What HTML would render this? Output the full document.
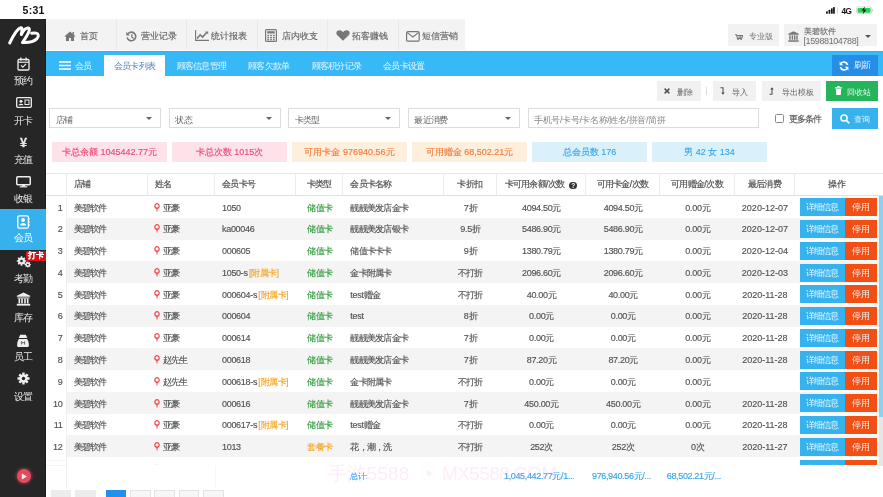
<!DOCTYPE html>
<html><head><meta charset="utf-8"><style>
*{margin:0;padding:0;box-sizing:border-box}
html,body{width:883px;height:497px;overflow:hidden;background:#fff}
body{position:relative;font-family:"Liberation Sans",sans-serif;color:#555;font-size:9px;letter-spacing:-0.75px}
.abs{position:absolute}
#status{position:absolute;left:0;top:0;width:883px;height:19px;background:#fff}
#time{position:absolute;left:22.5px;top:3.6px;font-size:10.5px;line-height:12px;font-weight:bold;color:#111;letter-spacing:0.3px;-webkit-text-stroke:0}
#side{position:absolute;z-index:10;left:0;top:19px;width:46px;height:478px;background:#262626}
.si{position:absolute;left:0;width:46px;height:40px;color:#e8e8e8;text-align:center}
.si .t{position:absolute;left:0;width:46px;font-size:10px;line-height:10px}
.si svg{position:absolute}
.si.act{background:#36b1ee;color:#fff}
#topnav{position:absolute;left:46px;top:19px;width:419px;height:31px;background:#f3f3f3}
.tn{position:absolute;top:0;height:31px;border-left:1px solid #e9e9e9;color:#666;font-size:9px;letter-spacing:0;line-height:31px}
.tn svg{position:absolute;margin-left:-1px}
.tn .tx{position:absolute;top:1.8px;margin-left:-1px}
#pro{position:absolute;left:728.4px;top:23.8px;width:50.4px;height:22.2px;background:#f2f2f2;color:#777;font-size:8px;letter-spacing:0;line-height:26px}
#acct{position:absolute;left:784px;top:23.8px;width:93.2px;height:22.2px;background:#f2f2f2;color:#777;font-size:8px;letter-spacing:0}
#bluebar{position:absolute;left:46px;top:51px;width:837px;height:25px;background:#36b9f6;border-top:1px solid #2cb4f4}
.bt{position:absolute;top:1.5px;height:25px;line-height:25px;color:#e9f6fd;font-size:9px}
#acttab{position:absolute;left:104px;top:55px;width:61px;height:21px;background:#fff;color:#5286bd;-webkit-text-stroke:0;font-size:9px;line-height:23px;text-align:center}
#refresh{position:absolute;left:832px;top:55px;width:46px;height:21px;background:#278ee7;color:#e6f2fc;font-size:8.5px;line-height:21px}
.tb{position:absolute;top:80.5px;height:20.5px;background:#f1f1f1;color:#666;font-size:8px;letter-spacing:0;line-height:24px}
.sel{position:absolute;top:108.2px;height:20.3px;border:1px solid #dcdcdc;background:#fff;color:#666;font-size:9px;line-height:23px;padding-left:5.8px}
.sel .car{position:absolute;right:8px;top:8px;width:0;height:0;border-left:3px solid transparent;border-right:3px solid transparent;border-top:3.5px solid #666}
.badge{position:absolute;top:142px;width:115px;height:20px;line-height:20px;text-align:center;font-size:9px;letter-spacing:0}
.pk{background:#fde2ea;color:#ec4a78}
.or{background:#fdefdc;color:#f47c3c}
.bl{background:#daf1fc;color:#3aa6e6}
#thead{position:absolute;left:0;top:173px;width:883px;height:22.6px;border-top:1px solid #e8e8e8;border-bottom:1.5px solid #e0e0e0}
#thead .c{top:0;height:21px;line-height:21px}
.c{position:absolute;white-space:nowrap;overflow:hidden}
.hd{border-right:1px solid #ececec;color:#4a4a4a}
.left{text-align:left;padding-left:7px}
.center{text-align:center}
.right{text-align:right;padding-right:3px}
.row{position:absolute;left:0;width:883px;height:21.77px}
.row .c{top:1.6px;height:21.77px;line-height:21.77px;color:#525252}
.row.even{background:linear-gradient(to right,#fff 66.5px,#f4f4f4 66.5px)}
.idx{border-right:1px solid #eee}
.gr{color:#2d9a3a}
.og{color:#f5a623}
.fs{color:#f5a623;margin-left:1.2px;letter-spacing:-0.5px}
.pin{display:inline-block;vertical-align:-1px;margin-left:-0.8px;margin-right:2.8px}
.ops{position:absolute;top:2.3px;height:18px;font-size:0;white-space:nowrap}
.ops span{display:inline-block;height:18px;line-height:18px;font-size:8.5px;color:#e9f6fd;text-align:center}
.b1{width:45px;background:#36b3ef}
.b2{width:32px;background:#f14f13}
.q{display:inline-block;width:7.5px;height:7.5px;border-radius:50%;background:#333;color:#fff;font-size:6.5px;line-height:7.5px;text-align:center;vertical-align:-0.5px;font-weight:bold;letter-spacing:0;-webkit-text-stroke:0;margin-left:3px}
#tbody{position:absolute;left:0;top:0}

.a{letter-spacing:-0.3px}
#wrap{position:absolute;left:0;top:0;width:883px;height:497px;overflow:hidden;will-change:transform}
#wrap{-webkit-text-stroke:0.15px currentColor}
#side .t{-webkit-text-stroke:0}
.dt .a{letter-spacing:0}
.ops span{-webkit-text-stroke:0}
.bt,#refresh,.tb span,#pro span{-webkit-text-stroke:0}
.wm{top:462px;line-height:24px;font-size:19px;color:rgba(248,160,225,0.2);white-space:nowrap;-webkit-text-stroke:0;letter-spacing:0.2px}
.sel{-webkit-text-stroke:0}

</style></head><body><div id="wrap">
<div id="status"><div id="time">5:31</div>
<svg class="abs" style="left:826px;top:6px" width="48" height="9" viewBox="0 0 48 9">
<g fill="#111"><rect x="0.1" y="5.2" width="1.7" height="2.5" rx="0.5"/><rect x="2.6" y="3.8" width="1.7" height="3.9" rx="0.5"/><rect x="5" y="2.3" width="1.7" height="5.4" rx="0.5"/><rect x="7.1" y="1" width="1.7" height="6.7" rx="0.5"/></g>
<rect x="10.9" y="1" width="0.8" height="6.7" fill="#ccc"/>
<text x="15.6" y="7.7" font-size="8.2" font-family="Liberation Sans" font-weight="bold" fill="#111" style="-webkit-text-stroke:0">4G</text>
<rect x="30.6" y="0.9" width="15" height="6.8" rx="1.8" fill="#fff" stroke="#d8c8c8" stroke-width="0.8"/><rect x="31.6" y="1.9" width="13" height="4.8" rx="0.8" fill="#2fcf58"/><rect x="46" y="3.2" width="0.9" height="2.2" fill="#ccc"/>
<path d="M38.9 0.6 L35.6 4.6 L37.8 4.6 L36.8 8.2 L40.3 3.7 L38.1 3.7 Z" fill="#111"/>
</svg>
</div>
<div id="side">
<div class="abs" style="left:44.6px;top:0;width:1.4px;height:478px;background:#1d1d1d"></div>
<svg class="abs" style="left:7px;top:6px" width="34" height="21" viewBox="0 0 34 21">
<path d="M2.7 18 C6 11 10 3.6 13.7 2.7 C15.6 2.3 15 6 14.3 9.6 C16.2 5.6 18.6 2.9 21.1 3 C23.6 3.1 22.6 7.2 15.5 17.5 C21 17.8 27 16.6 30 13.6 C32.1 11.2 31.6 8.6 29.1 8.1 C27.6 7.8 26.2 8 24.7 8.3" fill="none" stroke="#fff" stroke-width="3" stroke-linecap="round" stroke-linejoin="round"/>
</svg>
<!-- items: top relative to side (19) -->
<div class="si" style="top:33px">
 <svg style="left:16.5px;top:4.5px" width="13" height="14" viewBox="0 0 13 14"><rect x="1" y="2.5" width="11" height="10.5" rx="1" fill="none" stroke="#eee" stroke-width="1.3"/><path d="M1 5.2h11" stroke="#eee" stroke-width="1.2"/><path d="M3.8 0.6v3M9.2 0.6v3" stroke="#eee" stroke-width="1.4"/><path d="M4 8.3l1.8 1.8 3.3-3.3" fill="none" stroke="#eee" stroke-width="1.2"/></svg>
 <div class="t" style="top:24px">预约</div></div>
<div class="si" style="top:72.5px">
 <svg style="left:15.5px;top:5px" width="16" height="11" viewBox="0 0 16 11"><rect x="0.7" y="0.7" width="14.6" height="9.6" rx="1" fill="none" stroke="#eee" stroke-width="1.3"/><circle cx="5" cy="4.2" r="1.5" fill="#eee"/><path d="M2.6 8.3c0-2 4.8-2 4.8 0z" fill="#eee"/><rect x="9" y="3" width="4" height="4.5" fill="none" stroke="#eee" stroke-width="1"/></svg>
 <div class="t" style="top:24px">开卡</div></div>
<div class="si" style="top:112px">
 <div style="position:absolute;left:0;width:46px;top:5px;font-size:12.5px;font-weight:bold;line-height:14px;color:#e8e8e8;-webkit-text-stroke:0.3px #e8e8e8">¥</div>
 <div class="t" style="top:23.8px">充值</div></div>
<div class="si" style="top:151.5px">
 <svg style="left:15.6px;top:5.8px" width="15" height="12" viewBox="0 0 15 12"><rect x="0.75" y="0.75" width="13.5" height="8" rx="1" fill="none" stroke="#eee" stroke-width="1.5"/><rect x="5.8" y="9" width="3.4" height="1.4" fill="#eee"/><rect x="3.8" y="10.2" width="7.4" height="1.2" fill="#eee"/></svg>
 <div class="t" style="top:23.5px">收银</div></div>
<div class="si act" style="top:190px;height:41px">
 <svg style="left:16.5px;top:6px" width="14" height="14" viewBox="0 0 14 14"><rect x="0.8" y="0.8" width="10.6" height="12.4" rx="1.6" fill="none" stroke="#fff" stroke-width="1.3"/><circle cx="6.1" cy="5" r="1.9" fill="#fff"/><path d="M3 10.6c0-3.6 6.2-3.6 6.2 0z" fill="#fff"/><path d="M12.2 3v1.6M12.2 6.2v1.6M12.2 9.4v1.6" stroke="#fff" stroke-width="1"/></svg>
 <div class="t" style="top:24px">会员</div></div>
<div class="si" style="top:230px">
 <svg style="left:15.5px;top:6.5px" width="16" height="12" viewBox="0 0 16 12"><g fill="#eee"><circle cx="5.5" cy="5" r="3.6"/><circle cx="11.8" cy="8.6" r="2.4"/></g><g fill="#262626"><circle cx="5.5" cy="5" r="1.3"/><circle cx="11.8" cy="8.6" r="0.9"/></g><g stroke="#eee" stroke-width="1.6"><path d="M5.5 0.3v9.4M0.8 5h9.4M2.2 1.7l6.6 6.6M8.8 1.7l-6.6 6.6"/><path d="M11.8 5.6v6M8.8 8.6h6M9.7 6.5l4.2 4.2M13.9 6.5l-4.2 4.2" stroke-width="1.1"/></g><g fill="#262626"><circle cx="5.5" cy="5" r="1.3"/><circle cx="11.8" cy="8.6" r="0.9"/></g></svg>
 <div style="position:absolute;left:25.5px;top:1.5px;width:20px;height:10px;background:#d8141b;color:#fff;font-size:8px;font-weight:bold;line-height:10px;text-align:center;border-radius:2px 0 0 2px">打卡</div>
 <div class="t" style="top:25px">考勤</div></div>
<div class="si" style="top:269.5px">
 <svg style="left:15.5px;top:3.5px" width="15" height="14" viewBox="0 0 15 14"><path d="M7.5 0.5L0.8 3.8v1h13.4v-1z" fill="#eee"/><rect x="1.5" y="5.5" width="12" height="1" fill="#eee"/><rect x="2.5" y="6.5" width="1.6" height="5" fill="#eee"/><rect x="5.2" y="6.5" width="1.6" height="5" fill="#eee"/><rect x="8.2" y="6.5" width="1.6" height="5" fill="#eee"/><rect x="10.9" y="6.5" width="1.6" height="5" fill="#eee"/><rect x="0.8" y="11.8" width="13.4" height="1.8" fill="#eee"/></svg>
 <div class="t" style="top:24.5px">库存</div></div>
<div class="si" style="top:309px">
 <svg style="left:17px;top:5.5px" width="12" height="14" viewBox="0 0 12 14"><path d="M3.2 0.8h5.6l1.5 3.2H1.7z" fill="#eee"/><path d="M1.8 5h8.4c1.1 2 1.7 4.2 1.7 6.4 0 1-0.8 1.6-1.8 1.6H1.9c-1 0-1.8-0.6-1.8-1.6C0.1 9.2 0.7 7 1.8 5z" fill="#eee"/><path d="M4.4 10.5V7.6l1.6 1.6 1.6-1.6v2.9" stroke="#555" stroke-width="0.9" fill="none"/></svg>
 <div class="t" style="top:24px">员工</div></div>
<div class="si" style="top:348.5px">
 <svg style="left:16.5px;top:4px" width="13" height="13" viewBox="0 0 13 13"><g stroke="#eee" stroke-width="2.4"><path d="M6.5 0.5v12M0.5 6.5h12M2.3 2.3l8.4 8.4M10.7 2.3l-8.4 8.4"/></g><circle cx="6.5" cy="6.5" r="4.2" fill="#eee"/><circle cx="6.5" cy="6.5" r="1.7" fill="#262626"/></svg>
 <div class="t" style="top:24px">设置</div></div>
<div style="position:absolute;left:16.5px;top:450px;width:14px;height:14px;border-radius:50%;background:#e4495d;box-shadow:0 0 3px 1px rgba(228,73,93,0.5)"></div>
<svg class="abs" style="left:21px;top:453.5px" width="7" height="7" viewBox="0 0 7 7"><path d="M0.8 0.5L6 3.5L0.8 6.5z" fill="#eee"/></svg>
</div>

<div id="topnav">
 <div class="tn" style="left:0;width:70px;border-left:none;padding-left:1px">
  <svg style="left:19px;top:11.5px" width="12" height="10" viewBox="0 0 11 9"><path d="M5.5 0.3L0.2 5h1.6v4h2.8V6.3h1.8V9h2.8V5h1.6z" fill="#777"/><rect x="7.8" y="0.8" width="1.4" height="2.5" fill="#777"/></svg>
  <div class="tx" style="left:34.5px">首页</div></div>
 <div class="tn" style="left:70px;width:70px;padding:0">
  <svg style="left:9.5px;top:11.5px" width="11" height="11" viewBox="0 0 11 11"><path d="M2.2 2.6A4.3 4.3 0 1 1 1.2 6.3" fill="none" stroke="#777" stroke-width="1.6"/><path d="M0.3 0.8v3.6h3.6z" fill="#777"/><path d="M5.8 3.2v2.8l1.8 1.4" fill="none" stroke="#777" stroke-width="1.3"/></svg>
  <div class="tx" style="left:24.5px">营业记录</div></div>
 <div class="tn" style="left:140px;width:71.5px">
  <svg style="left:9px;top:11px" width="14" height="11" viewBox="0 0 14 11"><path d="M0.6 0v10.4H14" fill="none" stroke="#777" stroke-width="1.1"/><path d="M2 8.6l3.2-3.8 2.4 2.2 4-4.6" fill="none" stroke="#777" stroke-width="1.6"/><path d="M10.2 1.6h3v3z" fill="#777"/></svg>
  <div class="tx" style="left:25px">统计报表</div></div>
 <div class="tn" style="left:211px;width:70px">
  <svg style="left:8px;top:9.5px" width="12" height="13" viewBox="0 0 12 13"><rect x="0.6" y="0.6" width="10.8" height="11.8" rx="1" fill="none" stroke="#777" stroke-width="1.2"/><rect x="2.3" y="2.2" width="7.4" height="2.3" fill="#777"/><g fill="#777"><rect x="2.3" y="5.8" width="1.8" height="1.4"/><rect x="5.1" y="5.8" width="1.8" height="1.4"/><rect x="7.9" y="5.8" width="1.8" height="1.4"/><rect x="2.3" y="8" width="1.8" height="1.4"/><rect x="5.1" y="8" width="1.8" height="1.4"/><rect x="7.9" y="8" width="1.8" height="1.4"/><rect x="2.3" y="10.1" width="1.8" height="1.2"/><rect x="5.1" y="10.1" width="1.8" height="1.2"/><rect x="7.9" y="10.1" width="1.8" height="1.2"/></g></svg>
  <div class="tx" style="left:24.5px">店内收支</div></div>
 <div class="tn" style="left:281px;width:71px">
  <svg style="left:8.5px;top:11px" width="14" height="11" viewBox="0 0 14 11"><path d="M7 10.8L1.3 5.3C-0.6 3.3 0.4 0.2 3.5 0.2 5.2 0.2 6.4 1.3 7 2.3 7.6 1.3 8.8 0.2 10.5 0.2c3.1 0 4.1 3.1 2.2 5.1z" fill="#777"/></svg>
  <div class="tx" style="left:24.5px">拓客赚钱</div></div>
 <div class="tn" style="left:352px;width:67px">
  <svg style="left:7.5px;top:11.5px" width="14" height="11" viewBox="0 0 14 11"><rect x="0.6" y="0.6" width="12.6" height="9.6" rx="1.3" fill="none" stroke="#777" stroke-width="1.2"/><path d="M1 1.4l5.9 4.6 5.9-4.6" fill="none" stroke="#777" stroke-width="1.2"/></svg>
  <div class="tx" style="left:24px">短信营销</div></div>
</div>
<div id="pro">
 <svg class="abs" style="left:6.4px;top:9.8px" width="8" height="6.5" viewBox="0 0 10 8"><path d="M0 0.8h1.8l1.4 4.6h5.1L9.6 1.8H2.6" fill="none" stroke="#777" stroke-width="1.4"/><circle cx="3.8" cy="7" r="1" fill="#777"/><circle cx="7.6" cy="7" r="1" fill="#777"/><path d="M5.2 2v3M7 2v3" stroke="#777" stroke-width="1"/></svg>
 <span class="abs" style="left:20.5px;top:0">专业版</span>
</div>
<div id="acct">
 <svg class="abs" style="left:4px;top:7px" width="11" height="11" viewBox="0 0 11 11"><path d="M5.5 0.2L0.3 2.8v1h10.4v-1z" fill="#777"/><g fill="#777"><rect x="1.3" y="4.3" width="1.4" height="4.5"/><rect x="3.7" y="4.3" width="1.4" height="4.5"/><rect x="6" y="4.3" width="1.4" height="4.5"/><rect x="8.3" y="4.3" width="1.4" height="4.5"/><rect x="0.3" y="9.3" width="10.4" height="1.5"/></g></svg>
 <span class="abs" style="left:19.5px;top:3.5px;line-height:10px;color:#707070">美碧软件</span>
 <span class="abs" style="left:19.5px;top:12.5px;line-height:10px;color:#707070;font-size:9px;letter-spacing:-0.4px;-webkit-text-stroke:0">[15988104788]</span>
 <div class="abs" style="left:81px;top:10.8px;width:0;height:0;border-left:3px solid transparent;border-right:3px solid transparent;border-top:3.5px solid #555"></div>
</div>

<div id="bluebar">
 <svg class="abs" style="left:13px;top:9px" width="12" height="9" viewBox="0 0 12 9"><path d="M0 1h12M0 4.5h12M0 8h12" stroke="#fff" stroke-width="1.6"/></svg>
 <div class="bt" style="left:29px">会员</div>
 <div class="bt" style="left:130.5px">顾客信息管理</div>
 <div class="bt" style="left:202px">顾客欠款单</div>
 <div class="bt" style="left:265.5px">顾客积分记录</div>
 <div class="bt" style="left:337px">会员卡设置</div>
</div>
<div id="acttab">会员卡列表</div>
<div id="refresh">
 <svg class="abs" style="left:6.5px;top:5.5px" width="10" height="10" viewBox="0 0 10 10"><path d="M8.6 4A3.8 3.8 0 0 0 1.8 2.6" fill="none" stroke="#fff" stroke-width="1.6"/><path d="M1.4 6A3.8 3.8 0 0 0 8.2 7.4" fill="none" stroke="#fff" stroke-width="1.6"/><path d="M0.6 0.6v3.6h3.6z" fill="#fff"/><path d="M9.4 9.4V5.8H5.8z" fill="#fff"/></svg>
 <span class="abs" style="left:21.5px;top:0">刷新</span>
</div>

<div class="tb" style="left:657px;width:44px">
 <svg class="abs" style="left:7px;top:7px" width="6" height="6" viewBox="0 0 6 6"><path d="M0.6 0.6l4.8 4.8M5.4 0.6L0.6 5.4" stroke="#555" stroke-width="1.5"/></svg>
 <span class="abs" style="left:20px;top:0">删除</span></div>
<div class="abs" style="left:706px;top:87px;width:1px;height:8px;background:#ddd"></div>
<div class="tb" style="left:712.5px;width:43.5px">
 <svg class="abs" style="left:7px;top:6px" width="6" height="8" viewBox="0 0 6 8"><path d="M0.5 0.7h2.5v6.3" fill="none" stroke="#555" stroke-width="1.1"/><path d="M1.2 5.6l1.8 2.2 1.8-2.2z" fill="#555"/></svg>
 <span class="abs" style="left:19.5px;top:0">导入</span></div>
<div class="tb" style="left:761.5px;width:59.5px">
 <svg class="abs" style="left:7px;top:6px" width="6" height="8" viewBox="0 0 6 8"><path d="M0.5 7.3h2.5V1" fill="none" stroke="#555" stroke-width="1.1"/><path d="M1.2 2.4l1.8-2.2 1.8 2.2z" fill="#555"/></svg>
 <span class="abs" style="left:20px;top:0">导出模板</span></div>
<div class="tb" style="left:826px;width:52px;background:#25b45a;color:#e6f7ec">
 <svg class="abs" style="left:8.5px;top:5.5px" width="7" height="9" viewBox="0 0 7 9"><rect x="0" y="1.3" width="7" height="1.2" fill="#fff"/><rect x="2.3" y="0" width="2.4" height="1.3" fill="#fff"/><path d="M0.8 3h5.4l-0.5 6H1.3z" fill="#fff"/></svg>
 <span class="abs" style="left:21px;top:0">回收站</span></div>

<div class="sel" style="left:49px;width:112px">店铺<i class="car"></i></div>
<div class="sel" style="left:168.5px;width:112px">状态<i class="car"></i></div>
<div class="sel" style="left:288px;width:112px">卡类型<i class="car"></i></div>
<div class="sel" style="left:407.5px;width:112.5px">最近消费<i class="car"></i></div>
<div class="sel" style="left:527.5px;width:231.5px;color:#888;letter-spacing:-0.4px">手机号/卡号/卡名称/姓名/拼音/简拼</div>
<div class="abs" style="left:775px;top:113.5px;width:9px;height:9px;border:1px solid #8a8a8a;border-radius:1.5px;background:#fff"></div>
<div class="abs" style="left:788.5px;top:108.5px;line-height:20px;font-size:9px;color:#555">更多条件</div>
<div class="tb" style="left:832px;top:108.3px;width:46px;background:#36b3ef;color:#e9f6fd">
 <svg class="abs" style="left:8px;top:5.5px" width="10" height="10" viewBox="0 0 10 10"><circle cx="4" cy="4" r="3.1" fill="none" stroke="#fff" stroke-width="1.5"/><path d="M6.3 6.3l3 3" stroke="#fff" stroke-width="1.8"/></svg>
 <span class="abs" style="left:22px;top:0">查询</span></div>

<div class="badge pk" style="left:52px">卡总余额 1045442.77元</div>
<div class="badge pk" style="left:172px">卡总次数 1015次</div>
<div class="badge or" style="left:292px">可用卡金 976940.56元</div>
<div class="badge or" style="left:412px">可用赠金 68,502.21元</div>
<div class="badge bl" style="left:532px">总会员数 176</div>
<div class="badge bl" style="left:652px">男 42 女 134</div>

<div id="thead"><div class="c center hd" style="left:46.00px;width:20.50px;"></div><div class="c left hd" style="left:66.50px;width:81.00px;">店铺</div><div class="c left hd" style="left:147.50px;width:67.50px;">姓名</div><div class="c left hd" style="left:215.00px;width:81.00px;">会员卡号</div><div class="c center hd" style="left:296.00px;width:47.30px;">卡类型</div><div class="c left hd" style="left:343.30px;width:100.30px;">会员卡名称</div><div class="c center hd" style="left:443.60px;width:53.40px;">卡折扣</div><div class="c center hd" style="left:497.00px;width:88.70px;">卡可用余额<span class="a">/</span>次数 <span class='q'><span class="a">?</span></span></div><div class="c center hd" style="left:585.70px;width:74.70px;">可用卡金<span class="a">/</span>次数</div><div class="c center hd" style="left:660.40px;width:74.40px;">可用赠金<span class="a">/</span>次数</div><div class="c center hd" style="left:734.80px;width:60.20px;">最后消费</div><div class="c center hd" style="left:795.00px;width:83.00px;border-right:none">操作</div></div>
<div id="tbody"><div class="row" style="top:196.00px"><div class="c right idx" style="left:46.00px;width:20.50px;"><span class="a">1</span></div><div class="c left pl" style="left:66.50px;width:81.00px;">美碧软件</div><div class="c left pl2" style="left:147.50px;width:67.50px;"><svg class="pin" width="6" height="9" viewBox="0 0 6 9"><circle cx="3" cy="2.9" r="2.2" fill="none" stroke="#f5464f" stroke-width="1.2"/><path d="M2.2 4.9h1.6L3.3 8.7H2.7z" fill="#f5464f"/></svg>亚豪</div><div class="c left pl" style="left:215.00px;width:81.00px;"><span class="a">1050</span></div><div class="c center" style="left:296.00px;width:47.30px;"><span class="gr">储值卡</span></div><div class="c left pl" style="left:343.30px;width:100.30px;">靓靓美发店金卡</div><div class="c center" style="left:443.60px;width:53.40px;"><span class="a">7</span>折</div><div class="c center" style="left:497.00px;width:88.70px;"><span class="a">4094.50</span>元</div><div class="c center" style="left:585.70px;width:74.70px;"><span class="a">4094.50</span>元</div><div class="c center" style="left:660.40px;width:74.40px;"><span class="a">0.00</span>元</div><div class="c center dt" style="left:734.80px;width:60.20px;"><span class="a">2020-12-07</span></div><div class="ops" style="left:799.6px"><span class="b1">详细信息</span><span class="b2">停用</span></div></div><div class="row even" style="top:217.77px"><div class="c right idx" style="left:46.00px;width:20.50px;"><span class="a">2</span></div><div class="c left pl" style="left:66.50px;width:81.00px;">美碧软件</div><div class="c left pl2" style="left:147.50px;width:67.50px;"><svg class="pin" width="6" height="9" viewBox="0 0 6 9"><circle cx="3" cy="2.9" r="2.2" fill="none" stroke="#f5464f" stroke-width="1.2"/><path d="M2.2 4.9h1.6L3.3 8.7H2.7z" fill="#f5464f"/></svg>亚豪</div><div class="c left pl" style="left:215.00px;width:81.00px;"><span class="a">ka00046</span></div><div class="c center" style="left:296.00px;width:47.30px;"><span class="gr">储值卡</span></div><div class="c left pl" style="left:343.30px;width:100.30px;">靓靓美发店银卡</div><div class="c center" style="left:443.60px;width:53.40px;"><span class="a">9.5</span>折</div><div class="c center" style="left:497.00px;width:88.70px;"><span class="a">5486.90</span>元</div><div class="c center" style="left:585.70px;width:74.70px;"><span class="a">5486.90</span>元</div><div class="c center" style="left:660.40px;width:74.40px;"><span class="a">0.00</span>元</div><div class="c center dt" style="left:734.80px;width:60.20px;"><span class="a">2020-12-07</span></div><div class="ops" style="left:799.6px"><span class="b1">详细信息</span><span class="b2">停用</span></div></div><div class="row" style="top:239.54px"><div class="c right idx" style="left:46.00px;width:20.50px;"><span class="a">3</span></div><div class="c left pl" style="left:66.50px;width:81.00px;">美碧软件</div><div class="c left pl2" style="left:147.50px;width:67.50px;"><svg class="pin" width="6" height="9" viewBox="0 0 6 9"><circle cx="3" cy="2.9" r="2.2" fill="none" stroke="#f5464f" stroke-width="1.2"/><path d="M2.2 4.9h1.6L3.3 8.7H2.7z" fill="#f5464f"/></svg>亚豪</div><div class="c left pl" style="left:215.00px;width:81.00px;"><span class="a">000605</span></div><div class="c center" style="left:296.00px;width:47.30px;"><span class="gr">储值卡</span></div><div class="c left pl" style="left:343.30px;width:100.30px;">储值卡卡卡</div><div class="c center" style="left:443.60px;width:53.40px;"><span class="a">9</span>折</div><div class="c center" style="left:497.00px;width:88.70px;"><span class="a">1380.79</span>元</div><div class="c center" style="left:585.70px;width:74.70px;"><span class="a">1380.79</span>元</div><div class="c center" style="left:660.40px;width:74.40px;"><span class="a">0.00</span>元</div><div class="c center dt" style="left:734.80px;width:60.20px;"><span class="a">2020-12-04</span></div><div class="ops" style="left:799.6px"><span class="b1">详细信息</span><span class="b2">停用</span></div></div><div class="row even" style="top:261.31px"><div class="c right idx" style="left:46.00px;width:20.50px;"><span class="a">4</span></div><div class="c left pl" style="left:66.50px;width:81.00px;">美碧软件</div><div class="c left pl2" style="left:147.50px;width:67.50px;"><svg class="pin" width="6" height="9" viewBox="0 0 6 9"><circle cx="3" cy="2.9" r="2.2" fill="none" stroke="#f5464f" stroke-width="1.2"/><path d="M2.2 4.9h1.6L3.3 8.7H2.7z" fill="#f5464f"/></svg>亚豪</div><div class="c left pl" style="left:215.00px;width:81.00px;"><span class="a">1050-s</span><span class="fs"><span class="a">[</span>附属卡<span class="a">]</span></span></div><div class="c center" style="left:296.00px;width:47.30px;"><span class="gr">储值卡</span></div><div class="c left pl" style="left:343.30px;width:100.30px;">金卡附属卡</div><div class="c center" style="left:443.60px;width:53.40px;">不打折</div><div class="c center" style="left:497.00px;width:88.70px;"><span class="a">2096.60</span>元</div><div class="c center" style="left:585.70px;width:74.70px;"><span class="a">2096.60</span>元</div><div class="c center" style="left:660.40px;width:74.40px;"><span class="a">0.00</span>元</div><div class="c center dt" style="left:734.80px;width:60.20px;"><span class="a">2020-12-03</span></div><div class="ops" style="left:799.6px"><span class="b1">详细信息</span><span class="b2">停用</span></div></div><div class="row" style="top:283.08px"><div class="c right idx" style="left:46.00px;width:20.50px;"><span class="a">5</span></div><div class="c left pl" style="left:66.50px;width:81.00px;">美碧软件</div><div class="c left pl2" style="left:147.50px;width:67.50px;"><svg class="pin" width="6" height="9" viewBox="0 0 6 9"><circle cx="3" cy="2.9" r="2.2" fill="none" stroke="#f5464f" stroke-width="1.2"/><path d="M2.2 4.9h1.6L3.3 8.7H2.7z" fill="#f5464f"/></svg>亚豪</div><div class="c left pl" style="left:215.00px;width:81.00px;"><span class="a">000604-s</span><span class="fs"><span class="a">[</span>附属卡<span class="a">]</span></span></div><div class="c center" style="left:296.00px;width:47.30px;"><span class="gr">储值卡</span></div><div class="c left pl" style="left:343.30px;width:100.30px;"><span class="a">test</span>赠金</div><div class="c center" style="left:443.60px;width:53.40px;">不打折</div><div class="c center" style="left:497.00px;width:88.70px;"><span class="a">40.00</span>元</div><div class="c center" style="left:585.70px;width:74.70px;"><span class="a">40.00</span>元</div><div class="c center" style="left:660.40px;width:74.40px;"><span class="a">0.00</span>元</div><div class="c center dt" style="left:734.80px;width:60.20px;"><span class="a">2020-11-28</span></div><div class="ops" style="left:799.6px"><span class="b1">详细信息</span><span class="b2">停用</span></div></div><div class="row even" style="top:304.85px"><div class="c right idx" style="left:46.00px;width:20.50px;"><span class="a">6</span></div><div class="c left pl" style="left:66.50px;width:81.00px;">美碧软件</div><div class="c left pl2" style="left:147.50px;width:67.50px;"><svg class="pin" width="6" height="9" viewBox="0 0 6 9"><circle cx="3" cy="2.9" r="2.2" fill="none" stroke="#f5464f" stroke-width="1.2"/><path d="M2.2 4.9h1.6L3.3 8.7H2.7z" fill="#f5464f"/></svg>亚豪</div><div class="c left pl" style="left:215.00px;width:81.00px;"><span class="a">000604</span></div><div class="c center" style="left:296.00px;width:47.30px;"><span class="gr">储值卡</span></div><div class="c left pl" style="left:343.30px;width:100.30px;"><span class="a">test</span></div><div class="c center" style="left:443.60px;width:53.40px;"><span class="a">8</span>折</div><div class="c center" style="left:497.00px;width:88.70px;"><span class="a">0.00</span>元</div><div class="c center" style="left:585.70px;width:74.70px;"><span class="a">0.00</span>元</div><div class="c center" style="left:660.40px;width:74.40px;"><span class="a">0.00</span>元</div><div class="c center dt" style="left:734.80px;width:60.20px;"><span class="a">2020-11-28</span></div><div class="ops" style="left:799.6px"><span class="b1">详细信息</span><span class="b2">停用</span></div></div><div class="row" style="top:326.62px"><div class="c right idx" style="left:46.00px;width:20.50px;"><span class="a">7</span></div><div class="c left pl" style="left:66.50px;width:81.00px;">美碧软件</div><div class="c left pl2" style="left:147.50px;width:67.50px;"><svg class="pin" width="6" height="9" viewBox="0 0 6 9"><circle cx="3" cy="2.9" r="2.2" fill="none" stroke="#f5464f" stroke-width="1.2"/><path d="M2.2 4.9h1.6L3.3 8.7H2.7z" fill="#f5464f"/></svg>亚豪</div><div class="c left pl" style="left:215.00px;width:81.00px;"><span class="a">000614</span></div><div class="c center" style="left:296.00px;width:47.30px;"><span class="gr">储值卡</span></div><div class="c left pl" style="left:343.30px;width:100.30px;">靓靓美发店金卡</div><div class="c center" style="left:443.60px;width:53.40px;"><span class="a">7</span>折</div><div class="c center" style="left:497.00px;width:88.70px;"><span class="a">0.00</span>元</div><div class="c center" style="left:585.70px;width:74.70px;"><span class="a">0.00</span>元</div><div class="c center" style="left:660.40px;width:74.40px;"><span class="a">0.00</span>元</div><div class="c center dt" style="left:734.80px;width:60.20px;"><span class="a">2020-11-28</span></div><div class="ops" style="left:799.6px"><span class="b1">详细信息</span><span class="b2">停用</span></div></div><div class="row even" style="top:348.39px"><div class="c right idx" style="left:46.00px;width:20.50px;"><span class="a">8</span></div><div class="c left pl" style="left:66.50px;width:81.00px;">美碧软件</div><div class="c left pl2" style="left:147.50px;width:67.50px;"><svg class="pin" width="6" height="9" viewBox="0 0 6 9"><circle cx="3" cy="2.9" r="2.2" fill="none" stroke="#f5464f" stroke-width="1.2"/><path d="M2.2 4.9h1.6L3.3 8.7H2.7z" fill="#f5464f"/></svg>赵先生</div><div class="c left pl" style="left:215.00px;width:81.00px;"><span class="a">000618</span></div><div class="c center" style="left:296.00px;width:47.30px;"><span class="gr">储值卡</span></div><div class="c left pl" style="left:343.30px;width:100.30px;">靓靓美发店金卡</div><div class="c center" style="left:443.60px;width:53.40px;"><span class="a">7</span>折</div><div class="c center" style="left:497.00px;width:88.70px;"><span class="a">87.20</span>元</div><div class="c center" style="left:585.70px;width:74.70px;"><span class="a">87.20</span>元</div><div class="c center" style="left:660.40px;width:74.40px;"><span class="a">0.00</span>元</div><div class="c center dt" style="left:734.80px;width:60.20px;"><span class="a">2020-11-28</span></div><div class="ops" style="left:799.6px"><span class="b1">详细信息</span><span class="b2">停用</span></div></div><div class="row" style="top:370.16px"><div class="c right idx" style="left:46.00px;width:20.50px;"><span class="a">9</span></div><div class="c left pl" style="left:66.50px;width:81.00px;">美碧软件</div><div class="c left pl2" style="left:147.50px;width:67.50px;"><svg class="pin" width="6" height="9" viewBox="0 0 6 9"><circle cx="3" cy="2.9" r="2.2" fill="none" stroke="#f5464f" stroke-width="1.2"/><path d="M2.2 4.9h1.6L3.3 8.7H2.7z" fill="#f5464f"/></svg>赵先生</div><div class="c left pl" style="left:215.00px;width:81.00px;"><span class="a">000618-s</span><span class="fs"><span class="a">[</span>附属卡<span class="a">]</span></span></div><div class="c center" style="left:296.00px;width:47.30px;"><span class="gr">储值卡</span></div><div class="c left pl" style="left:343.30px;width:100.30px;">金卡附属卡</div><div class="c center" style="left:443.60px;width:53.40px;">不打折</div><div class="c center" style="left:497.00px;width:88.70px;"><span class="a">0.00</span>元</div><div class="c center" style="left:585.70px;width:74.70px;"><span class="a">0.00</span>元</div><div class="c center" style="left:660.40px;width:74.40px;"><span class="a">0.00</span>元</div><div class="c center dt" style="left:734.80px;width:60.20px;"></div><div class="ops" style="left:799.6px"><span class="b1">详细信息</span><span class="b2">停用</span></div></div><div class="row even" style="top:391.93px"><div class="c right idx" style="left:46.00px;width:20.50px;"><span class="a">10</span></div><div class="c left pl" style="left:66.50px;width:81.00px;">美碧软件</div><div class="c left pl2" style="left:147.50px;width:67.50px;"><svg class="pin" width="6" height="9" viewBox="0 0 6 9"><circle cx="3" cy="2.9" r="2.2" fill="none" stroke="#f5464f" stroke-width="1.2"/><path d="M2.2 4.9h1.6L3.3 8.7H2.7z" fill="#f5464f"/></svg>亚豪</div><div class="c left pl" style="left:215.00px;width:81.00px;"><span class="a">000616</span></div><div class="c center" style="left:296.00px;width:47.30px;"><span class="gr">储值卡</span></div><div class="c left pl" style="left:343.30px;width:100.30px;">靓靓美发店金卡</div><div class="c center" style="left:443.60px;width:53.40px;"><span class="a">7</span>折</div><div class="c center" style="left:497.00px;width:88.70px;"><span class="a">450.00</span>元</div><div class="c center" style="left:585.70px;width:74.70px;"><span class="a">450.00</span>元</div><div class="c center" style="left:660.40px;width:74.40px;"><span class="a">0.00</span>元</div><div class="c center dt" style="left:734.80px;width:60.20px;"><span class="a">2020-11-28</span></div><div class="ops" style="left:799.6px"><span class="b1">详细信息</span><span class="b2">停用</span></div></div><div class="row" style="top:413.70px"><div class="c right idx" style="left:46.00px;width:20.50px;"><span class="a">11</span></div><div class="c left pl" style="left:66.50px;width:81.00px;">美碧软件</div><div class="c left pl2" style="left:147.50px;width:67.50px;"><svg class="pin" width="6" height="9" viewBox="0 0 6 9"><circle cx="3" cy="2.9" r="2.2" fill="none" stroke="#f5464f" stroke-width="1.2"/><path d="M2.2 4.9h1.6L3.3 8.7H2.7z" fill="#f5464f"/></svg>亚豪</div><div class="c left pl" style="left:215.00px;width:81.00px;"><span class="a">000617-s</span><span class="fs"><span class="a">[</span>附属卡<span class="a">]</span></span></div><div class="c center" style="left:296.00px;width:47.30px;"><span class="gr">储值卡</span></div><div class="c left pl" style="left:343.30px;width:100.30px;"><span class="a">test</span>赠金</div><div class="c center" style="left:443.60px;width:53.40px;">不打折</div><div class="c center" style="left:497.00px;width:88.70px;"><span class="a">0.00</span>元</div><div class="c center" style="left:585.70px;width:74.70px;"><span class="a">0.00</span>元</div><div class="c center" style="left:660.40px;width:74.40px;"><span class="a">0.00</span>元</div><div class="c center dt" style="left:734.80px;width:60.20px;"><span class="a">2020-11-28</span></div><div class="ops" style="left:799.6px"><span class="b1">详细信息</span><span class="b2">停用</span></div></div><div class="row even" style="top:435.47px"><div class="c right idx" style="left:46.00px;width:20.50px;"><span class="a">12</span></div><div class="c left pl" style="left:66.50px;width:81.00px;">美碧软件</div><div class="c left pl2" style="left:147.50px;width:67.50px;"><svg class="pin" width="6" height="9" viewBox="0 0 6 9"><circle cx="3" cy="2.9" r="2.2" fill="none" stroke="#f5464f" stroke-width="1.2"/><path d="M2.2 4.9h1.6L3.3 8.7H2.7z" fill="#f5464f"/></svg>亚豪</div><div class="c left pl" style="left:215.00px;width:81.00px;"><span class="a">1013</span></div><div class="c center" style="left:296.00px;width:47.30px;"><span class="og">套餐卡</span></div><div class="c left pl" style="left:343.30px;width:100.30px;">花，潮，洗</div><div class="c center" style="left:443.60px;width:53.40px;">不打折</div><div class="c center" style="left:497.00px;width:88.70px;"><span class="a">252</span>次</div><div class="c center" style="left:585.70px;width:74.70px;"><span class="a">252</span>次</div><div class="c center" style="left:660.40px;width:74.40px;"><span class="a">0</span>次</div><div class="c center dt" style="left:734.80px;width:60.20px;"><span class="a">2020-11-27</span></div><div class="ops" style="left:799.6px"><span class="b1">详细信息</span><span class="b2">停用</span></div></div><div class="row" style="top:457.24px"><div class="c right idx" style="left:46.00px;width:20.50px;"><span class="a">13</span></div><div class="c left pl" style="left:66.50px;width:81.00px;">美碧软件</div><div class="c left pl2" style="left:147.50px;width:67.50px;"><svg class="pin" width="6" height="9" viewBox="0 0 6 9"><circle cx="3" cy="2.9" r="2.2" fill="none" stroke="#f5464f" stroke-width="1.2"/><path d="M2.2 4.9h1.6L3.3 8.7H2.7z" fill="#f5464f"/></svg>亚豪</div><div class="c left pl" style="left:215.00px;width:81.00px;"><span class="a">000613</span></div><div class="c center" style="left:296.00px;width:47.30px;"><span class="gr">储值卡</span></div><div class="c left pl" style="left:343.30px;width:100.30px;">靓靓美发店金卡</div><div class="c center" style="left:443.60px;width:53.40px;"><span class="a">7</span>折</div><div class="c center" style="left:497.00px;width:88.70px;"><span class="a">0.00</span>元</div><div class="c center" style="left:585.70px;width:74.70px;"><span class="a">0.00</span>元</div><div class="c center" style="left:660.40px;width:74.40px;"><span class="a">0.00</span>元</div><div class="c center dt" style="left:734.80px;width:60.20px;"><span class="a">2020-11-27</span></div><div class="ops" style="left:799.6px"><span class="b1">详细信息</span><span class="b2">停用</span></div></div></div>
<div id="fade"></div>
<div class="abs" style="left:46px;top:457.2px;width:749px;height:9px;background:rgba(255,255,255,0.88)"></div>
<div class="abs" style="left:46px;top:465.3px;width:837px;height:32px;background:#fff"></div>
<div class="abs" style="left:66px;top:457px;width:1px;height:30px;background:#efefef"></div>
<div class="abs" style="left:46px;top:465px;width:20px;height:1px;background:#f3f3f3"></div>
<div class="abs" style="left:46px;top:460px;width:20px;height:1px;background:#f5f5f5"></div>
<div class="abs" style="left:215px;top:466px;width:1px;height:21px;background:#f7f7f7"></div>
<div class="abs" style="left:878.8px;top:196px;width:4.2px;height:220.5px;background:#8fd0f0"></div>
<div class="abs" style="left:878.8px;top:416.5px;width:4.2px;height:49px;background:#e6e6e6"></div>
<div class="abs" style="left:349.5px;top:466px;line-height:21px;font-size:8px;letter-spacing:0;color:#3aa6e6">总计:</div>
<div class="abs" style="left:504px;top:466px;line-height:21px;font-size:9px;letter-spacing:-0.35px;color:#36a5ea">1,045,442.77元/1...</div>
<div class="abs" style="left:592px;top:466px;line-height:21px;font-size:9px;letter-spacing:-0.35px;color:#36a5ea">976,940.56元/...</div>
<div class="abs" style="left:666.8px;top:466px;line-height:21px;font-size:9px;letter-spacing:-0.35px;color:#36a5ea">68,502.21元/...</div>
<div class="abs wm" style="left:328px">手游5588</div>
<div class="abs wm" style="left:425.5px">•</div>
<div class="abs wm" style="left:442px;letter-spacing:-0.6px">MX5588.COM</div>
<div class="abs" style="left:50.5px;top:490.4px;width:20px;height:7px;background:#ececec"></div>
<div class="abs" style="left:75.4px;top:490.4px;width:20.4px;height:7px;background:#ececec"></div>
<div class="abs" style="left:106px;top:490.4px;width:20.4px;height:7px;background:#2290ef"></div>
<div class="abs" style="left:130.3px;top:490.4px;width:20.3px;height:7px;background:#f6f6f6;border:1px solid #e4e4e4;border-bottom:none"></div>
<div class="abs" style="left:154.3px;top:490.4px;width:20.8px;height:7px;background:#f6f6f6;border:1px solid #e4e4e4;border-bottom:none"></div>
<div class="abs" style="left:178.5px;top:490.4px;width:20.8px;height:7px;background:#f6f6f6;border:1px solid #e4e4e4;border-bottom:none"></div>
<div class="abs" style="left:202.7px;top:490.4px;width:21.1px;height:7px;background:#f6f6f6;border:1px solid #e4e4e4;border-bottom:none"></div>

</div></body></html>
